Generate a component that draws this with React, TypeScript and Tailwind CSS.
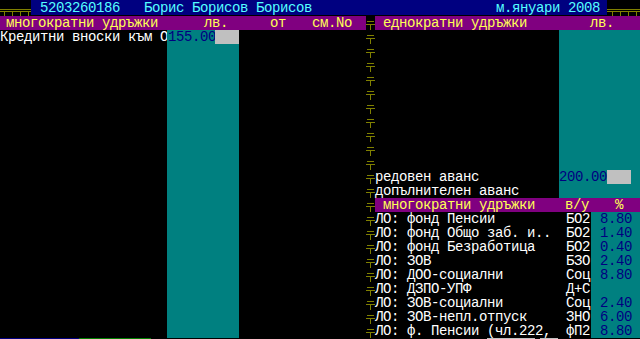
import React from "react";

const OL = "#808000";

function TopDeco({ w, ticks }: { w: number; ticks: number[] }) {
  return (
    <svg width={w} height={16} className="block shrink-0" shapeRendering="crispEdges">
      <rect x={0} y={9} width={w} height={1} fill={OL} />
      <rect x={0} y={11} width={w} height={1} fill={OL} />
      {ticks.map((t) => (
        <rect key={t} x={t} y={11} width={1} height={5} fill={OL} />
      ))}
    </svg>
  );
}

function Tee() {
  return (
    <svg width={9} height={14} className="block" shapeRendering="crispEdges">
      <rect x={1} y={5} width={7} height={1} fill={OL} />
      <rect x={0} y={8} width={9} height={1} fill={OL} />
      <rect x={4} y={8} width={1} height={6} fill={OL} />
    </svg>
  );
}

const lo: [string, string, string][] = [
  ["ЛО: фонд Пенсии", "БО2", "8.80"],
  ["ЛО: фонд Общо заб. и..", "БО2", "1.40"],
  ["ЛО: фонд Безработица", "БО2", "0.40"],
  ["ЛО: ЗОВ", "БЗО", "2.40"],
  ["ЛО: ДОО-социални", "Соц", "8.80"],
  ["ЛО: ДЗПО-УПФ", "Д+С", ""],
  ["ЛО: ЗОВ-социални", "Соц", "2.40"],
  ["ЛО: ЗОВ-непл.отпуск", "ЗНО", "6.00"],
  ["ЛО: ф. Пенсии (чл.222,", "фП2", "8.80"],
];

export default function App() {
  const leftRows = Array.from({ length: 21 });
  const rightRows = Array.from({ length: 10 });
  const tees = Array.from({ length: 23 });
  return (
    <div className="w-[640px] h-[339px] bg-black overflow-hidden font-['Liberation_Mono',monospace] text-[14px] leading-[14px] tracking-[-0.4px] whitespace-pre">
      {/* row 0 */}
      <div className="flex h-[16px]">
        <TopDeco w={31} ticks={[4, 12, 20, 28]} />
        <div className="w-[576px] h-[15px] bg-[#000080] text-[#55ffff] flex items-center pl-[9px] pt-[1px]">
          <span className="w-[104px]">5203260186</span>
          <span className="w-[352px]">Борис Борисов Борисов</span>
          <span>м.януари 2008</span>
        </div>
        <TopDeco w={33} ticks={[5, 13, 21, 29]} />
      </div>
      {/* body */}
      <div className="flex h-[322px]">
        {/* left panel */}
        <div className="w-[366px] flex flex-col">
          <div className="h-[14px] bg-[#800080] text-[#ffff55] flex pl-[6px]">
            <span className="w-[198px]">многократни удръжки</span>
            <span className="w-[66px]">лв.</span>
            <span className="w-[42px]">от</span>
            <span>см.No</span>
          </div>
          <div className="h-[14px] flex">
            <span className="w-[167px] text-white">Кредитни вноски към О</span>
            <div className="w-[72px] bg-[#008080] flex">
              <span className="w-[48px] pl-[1px] text-[#000080]">155.00</span>
              <span className="w-[24px] bg-[#c0c0c0]" />
            </div>
          </div>
          {leftRows.map((_, i) => (
            <div key={i} className="h-[14px] flex">
              <span className="w-[167px]" />
              <span className="w-[72px] bg-[#008080]" />
            </div>
          ))}
        </div>
        {/* divider */}
        <div className="w-[9px] flex flex-col">
          {tees.map((_, i) => (
            <Tee key={i} />
          ))}
        </div>
        {/* right panel */}
        <div className="w-[265px] flex flex-col">
          <div className="h-[14px] bg-[#800080] text-[#ffff55] flex pl-[8px]">
            <span className="w-[207px]">еднократни удръжки</span>
            <span>лв.</span>
          </div>
          {rightRows.map((_, i) => (
            <div key={i} className="h-[14px] flex">
              <span className="w-[184px]" />
              <span className="flex-1 bg-[#008080]" />
            </div>
          ))}
          <div className="h-[14px] flex">
            <span className="w-[184px] text-white">редовен аванс</span>
            <div className="flex-1 bg-[#008080] flex">
              <span className="w-[48px] text-[#000080]">200.00</span>
              <span className="w-[24px] bg-[#c0c0c0]" />
            </div>
          </div>
          <div className="h-[14px] flex">
            <span className="w-[184px] text-white">допълнителен аванс</span>
            <span className="flex-1 bg-[#008080]" />
          </div>
          <div className="h-[14px] bg-[#800080] text-[#ffff55] flex pl-[8px]">
            <span className="w-[182px]">многократни удръжки</span>
            <span className="w-[50px]">в/у</span>
            <span>%</span>
          </div>
          {lo.map(([name, code, val], i) => (
            <div key={i} className="h-[14px] flex">
              <span className="w-[191px] text-white">{name}</span>
              <span className="w-[25px] text-white">{code}</span>
              <span className="flex-1 bg-[#008080] text-[#000080] pl-[9px]">{val}</span>
            </div>
          ))}
        </div>
      </div>
      {/* bottom line */}
      <div className="flex h-[1px]">
        <span className="w-[79px] bg-[#000080]" />
        <span className="w-[72px] bg-[#008000]" />
        <span className="w-[336px]" />
        <span className="w-[48px] bg-[#c0c0c0]" />
        <span className="w-[5px]" />
        <span className="w-[18px] bg-[#c0c0c0]" />
      </div>
    </div>
  );
}
